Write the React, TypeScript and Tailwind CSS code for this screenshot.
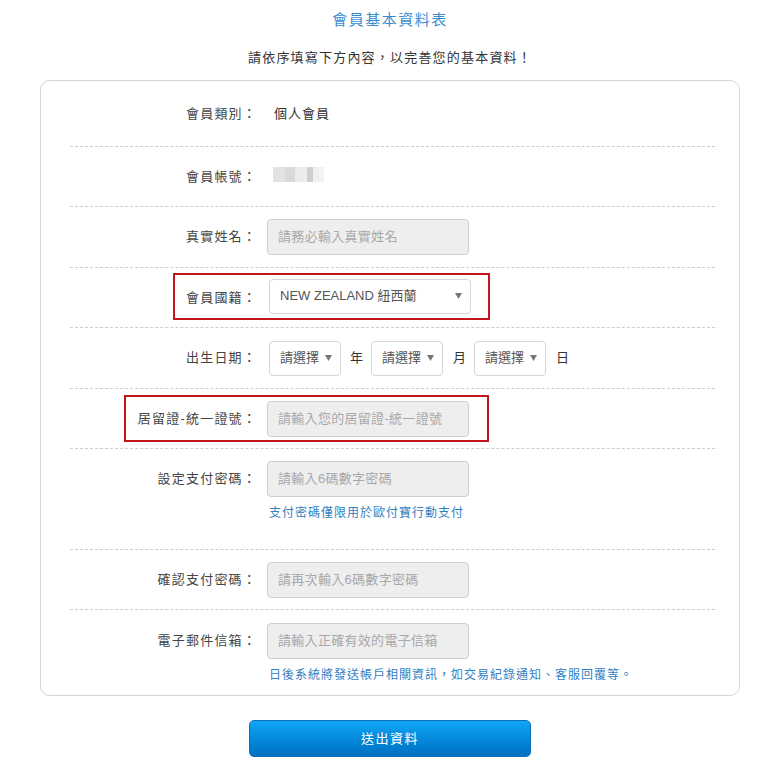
//form page for member profile
const font = "font-['Liberation_Sans','Noto_Sans_CJK_TC',sans-serif]";

//----------------------------------------------------------------------

function Caret() {
  return (
    <svg width="7" height="6" viewBox="0 0 7 6" className="shrink-0">
      <path d="M0 0 L7 0 L3.5 6 Z" fill="#777" />
    </svg>
  );
}

function Label({ children }: { children: React.ReactNode }) {
  return (
    <div className="w-[187px] shrink-0 text-right text-[13px] leading-[18px] tracking-[1.2px] text-[#444]">
      {children}
    </div>
  );
}

function TextInput({ placeholder }: { placeholder: string }) {
  return (
    <div className="flex h-[36px] w-[202px] items-center rounded-[4px] border border-[#cfcfcf] bg-[#eeeeee] pl-[10px] text-[13px] tracking-[0.3px] text-[#a8a8a8]">
      {placeholder}
    </div>
  );
}

function Select({ value, width, height }: { value: string; width: string; height: string }) {
  return (
    <div
      className={`flex ${width} ${height} items-center justify-between rounded-[4px] border border-[#d6d6d6] bg-white pl-[10px] pr-[8px] text-[13px] text-[#555]`}
    >
      <span>{value}</span>
      <Caret />
    </div>
  );
}

function Help({ children }: { children: React.ReactNode }) {
  return (
    <div className="ml-[199px] text-[12px] leading-[17px] tracking-[1px] text-[#2f7fc4]">
      {children}
    </div>
  );
}

//----------------------------------------------------------------------

export default function App() {
  return (
    <div className={`${font} w-[780px] bg-white pb-[15px]`}>
      {/* heading */}
      <div className="pt-[10px] text-center">
        <h1 className="text-[15px] leading-[20px] tracking-[1.5px] text-[#3a8ccf]">會員基本資料表</h1>
        <p className="mt-[19px] text-[13px] leading-[18px] tracking-[1.2px] text-[#333]">
          請依序填寫下方內容，以完善您的基本資料！
        </p>
      </div>

      {/* form panel */}
      <div className="mx-[40px] mt-[13px] rounded-[10px] border border-[#d5d5d5] px-[29px] pr-[24px]">
        {/* member type */}
        <div className="flex h-[66px] items-center border-b border-dashed border-[#cccccc]">
          <Label>會員類別：</Label>
          <div className="ml-[17px] text-[13px] tracking-[1px] text-[#333]">個人會員</div>
        </div>

        {/* account */}
        <div className="flex h-[60px] items-center border-b border-dashed border-[#cccccc]">
          <Label>會員帳號：</Label>
          <div className="ml-[16px] mt-[-5px] flex h-[15px]">
            <div className="w-[12px] bg-[#e3e3e3]" />
            <div className="w-[10px] bg-[#d9d9d9]" />
            <div className="w-[12px] bg-[#ececec]" />
            <div className="w-[6px] bg-[#cfcfcf]" />
            <div className="w-[6px] bg-[#f0f0f0]" />
            <div className="w-[5px] bg-[#eef4f8]" />
          </div>
        </div>

        {/* real name */}
        <div className="flex h-[61px] items-center gap-[10px] border-b border-dashed border-[#cccccc]">
          <Label>真實姓名：</Label>
          <TextInput placeholder="請務必輸入真實姓名" />
        </div>

        {/* nationality */}
        <div className="relative flex h-[60px] items-center border-b border-dashed border-[#cccccc]">
          <Label>會員國籍：</Label>
          <div className="ml-[12px] mt-[-3px]">
            <Select value="NEW ZEALAND 紐西蘭" width="w-[202px]" height="h-[35px]" />
          </div>
          <div className="absolute left-[103px] top-[5px] h-[47px] w-[317px] border-2 border-[#c4151c]" />
        </div>

        {/* birthday */}
        <div className="flex h-[61px] items-center border-b border-dashed border-[#cccccc]">
          <Label>出生日期：</Label>
          <div className="ml-[12px] flex items-center text-[13px] text-[#333]">
            <Select value="請選擇" width="w-[72px]" height="h-[35px]" />
            <span className="ml-[9px] mr-[8px]">年</span>
            <Select value="請選擇" width="w-[72px]" height="h-[35px]" />
            <span className="ml-[10px] mr-[8px]">月</span>
            <Select value="請選擇" width="w-[72px]" height="h-[35px]" />
            <span className="ml-[10px]">日</span>
          </div>
        </div>

        {/* residence permit */}
        <div className="relative flex h-[60px] items-center gap-[10px] border-b border-dashed border-[#cccccc]">
          <Label>居留證-統一證號：</Label>
          <TextInput placeholder="請輸入您的居留證-統一證號" />
          <div className="absolute left-[54px] top-[6px] h-[47px] w-[365px] border-2 border-[#c4151c]" />
        </div>

        {/* payment password */}
        <div className="h-[101px] border-b border-dashed border-[#cccccc] pt-[12px]">
          <div className="flex items-center gap-[10px]">
            <Label>設定支付密碼：</Label>
            <TextInput placeholder="請輸入6碼數字密碼" />
          </div>
          <div className="mt-[8px]">
            <Help>支付密碼僅限用於歐付寶行動支付</Help>
          </div>
        </div>

        {/* confirm password */}
        <div className="flex h-[60px] items-center gap-[10px] border-b border-dashed border-[#cccccc]">
          <Label>確認支付密碼：</Label>
          <TextInput placeholder="請再次輸入6碼數字密碼" />
        </div>

        {/* email */}
        <div className="h-[85px] pt-[13px]">
          <div className="flex items-center gap-[10px]">
            <Label>電子郵件信箱：</Label>
            <TextInput placeholder="請輸入正確有效的電子信箱" />
          </div>
          <div className="mt-[8px]">
            <Help>日後系統將發送帳戶相關資訊，如交易紀錄通知、客服回覆等。</Help>
          </div>
        </div>
      </div>

      {/* submit */}
      <div className="mt-[24px] flex justify-center">
        <button className="h-[37px] w-[282px] rounded-[5px] border border-[#0a6fb8] bg-gradient-to-b from-[#10a6f6] to-[#0070c2] text-[13px] tracking-[1.5px] text-white">
          送出資料
        </button>
      </div>
    </div>
  );
}
